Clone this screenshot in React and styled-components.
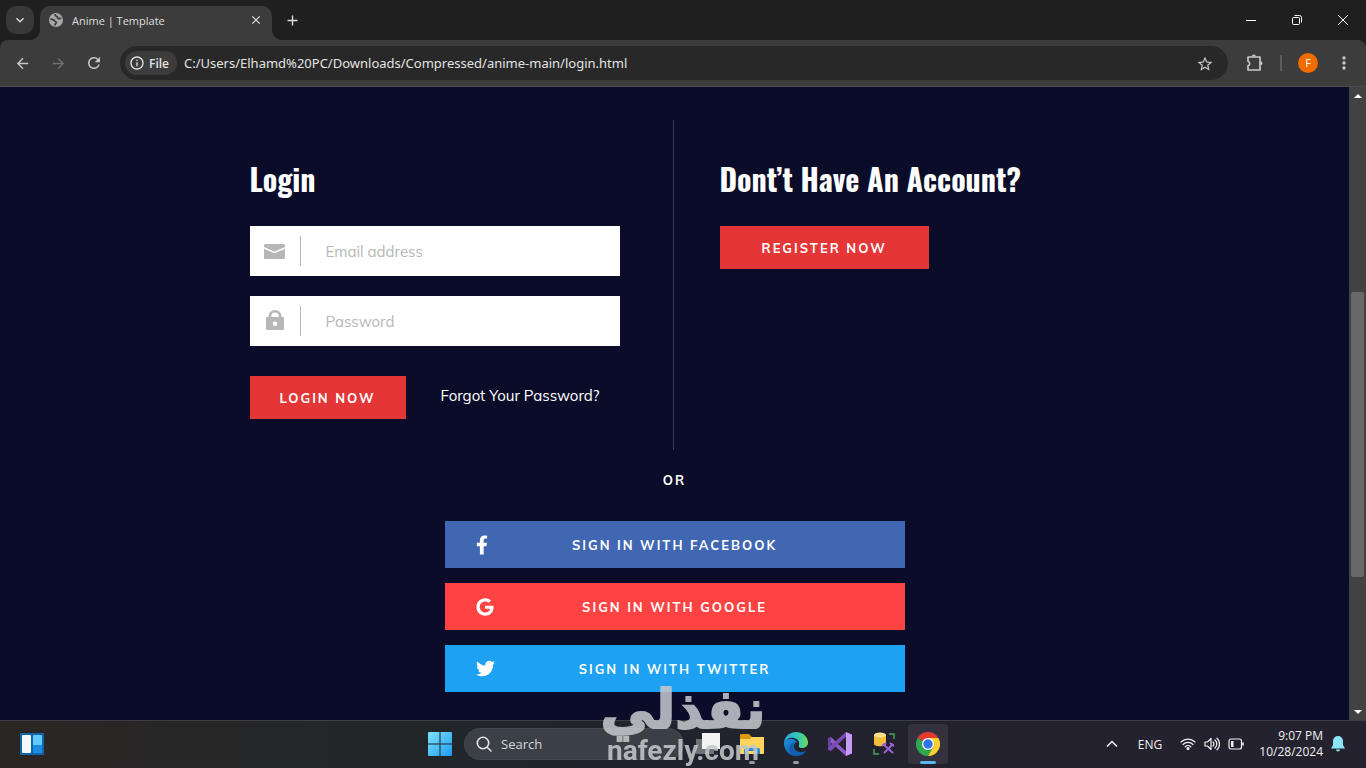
import React from 'react'
import { createGlobalStyle, styled } from 'styled-components'
import { FaFacebookF, FaGoogle, FaTwitter } from 'react-icons/fa'
import {
  MdArrowBack,
  MdArrowForward,
  MdRefresh,
  MdInfoOutline,
  MdStarBorder,
  MdMoreVert,
  MdClose,
  MdAdd,
  MdKeyboardArrowDown,
} from 'react-icons/md'

const uiFont = '"Open Sans", "Noto Sans", sans-serif'
const bodyFont = 'Mulish, Muli, Nunito, Lato, "Open Sans", sans-serif'

const GlobalStyle = createGlobalStyle`
  * {
    box-sizing: border-box;
  }
  body {
    margin: 0;
    background: #0b0c2a;
    font-family: ${uiFont};
  }
  button {
    padding: 0;
    border: 0;
    background: none;
    color: inherit;
    font-family: inherit;
    cursor: pointer;
  }
  input {
    min-width: 0;
    padding: 0;
    border: 0;
    outline: 0;
    background: none;
    font-family: inherit;
  }
  svg {
    display: block;
    flex: none;
  }
`

const Desktop = styled.div`
  display: flex;
  flex-direction: column;
  min-height: 100vh;
`

/* browser */
const TabStrip = styled.header`
  display: flex;
  align-items: center;
  height: 40px;
  padding-left: 6px;
  background: #1f1f1f;
  color: #dedede;
`

const TabSearch = styled.button`
  display: grid;
  place-items: center;
  width: 28px;
  height: 28px;
  border-radius: 10px;
  background: #383838;
`

const Tab = styled.div`
  position: relative;
  display: flex;
  align-items: center;
  align-self: flex-end;
  gap: 9px;
  width: 232px;
  height: 34px;
  margin-left: 6px;
  padding: 0 8px 6px 9px;
  border-radius: 10px 10px 0 0;
  background: #3c3c3c;
  font-size: 11px;

  &::before,
  &::after {
    content: '';
    position: absolute;
    bottom: 0;
    width: 10px;
    height: 10px;
  }
  &::before {
    right: 100%;
    background: radial-gradient(circle at 0 0, transparent 10px, #3c3c3c 10px);
  }
  &::after {
    left: 100%;
    background: radial-gradient(circle at 100% 0, transparent 10px, #3c3c3c 10px);
  }
`

const TabTitle = styled.span`
  flex: 1;
  white-space: nowrap;
`

const SmallButton = styled.button`
  display: grid;
  place-items: center;
  width: 16px;
  height: 16px;
`

const NewTab = styled(SmallButton)`
  width: 28px;
  height: 28px;
  margin-left: 6px;
`

const WindowButtons = styled.div`
  display: flex;
  margin-left: auto;
`

const WindowButton = styled.button`
  display: grid;
  place-items: center;
  width: 46px;
  height: 40px;
`

const ToolbarBack = styled.div`
  background: #1f1f1f;
`

const Toolbar = styled.div`
  display: flex;
  align-items: center;
  height: 47px;
  padding: 0 8px;
  border-bottom: 1px solid #4b4a52;
  border-radius: 8px 8px 0 0;
  background: #3c3c3c;
  color: #c7c7c7;
`

const ToolButton = styled.button`
  display: grid;
  place-items: center;
  width: 28px;
  height: 28px;
  margin-right: 8px;
  color: ${(props) => (props.$dim ? '#6f6f6f' : '#c7c7c7')};
`

const Omnibox = styled.div`
  display: flex;
  flex: 1;
  align-items: center;
  height: 34px;
  margin: 0 12px 0 4px;
  padding: 0 16px 0 5px;
  border-radius: 17px;
  background: #282828;
`

const FileChip = styled.button`
  display: flex;
  align-items: center;
  gap: 4px;
  height: 24px;
  padding: 0 8px 0 4px;
  border-radius: 12px;
  background: #3c3c3c;
  color: #e3e3e3;
  font-size: 12px;
  font-weight: 600;
`

const AddressInput = styled.input`
  flex: 1;
  margin-left: 7px;
  color: #e3e3e3;
  font-family: "Noto Sans", sans-serif;
  font-size: 13px;
`

const Divider = styled.span`
  width: 2px;
  height: 16px;
  margin: 0 12px 0 4px;
  background: #5c5c5c;
`

const Avatar = styled.button`
  width: 20px;
  height: 20px;
  margin: 0 12px 0 4px;
  border-radius: 50%;
  background: #ef6c00;
  color: #fff;
  font-size: 11px;
  line-height: 20px;
`

const MenuButton = styled(ToolButton)`
  margin-right: 0;
`

const Viewport = styled.div`
  display: flex;
  flex: 1;
`

const Page = styled.main`
  flex: 1;
  padding: 33px 20px 0;
  background: #0b0c2a;
  color: #fff;
  font-family: ${bodyFont};
`

const ScrollBar = styled.div`
  display: flex;
  flex-direction: column;
  width: 17px;
  background: #424242;
  color: #fff;
`

const ScrollArrow = styled.button`
  display: grid;
  place-items: center;
  width: 17px;
  height: 17px;
`

const ScrollSpace = styled.div`
  flex: ${(props) => props.$size};
`

const ScrollThumb = styled.div`
  flex: 285;
  margin: 0 2px;
  border-radius: 2px;
  background: #686868;
`

/* login page */
const Columns = styled.div`
  display: grid;
  grid-template-columns: 424px 1fr;
  max-width: 850px;
  margin: 0 auto;
`

const LoginColumn = styled.section`
  min-height: 330px;
  padding: 41px 53px 0 0;
  border-right: 1px solid #3b3c55;
`

const RegisterColumn = styled.section`
  padding: 41px 0 0 46px;
`

const Title = styled.h3`
  margin: 0 0 29px;
  font-family: Oswald, sans-serif;
  font-size: 30px;
  font-weight: 700;
  line-height: 36px;
  white-space: nowrap;
`

const Field = styled.label`
  display: flex;
  align-items: center;
  height: 50px;
  margin-bottom: 20px;
  background: #fff;
  color: #b7b7b7;
`

const FieldIcon = styled.span`
  display: grid;
  place-items: center;
  width: 51px;
  height: 30px;
  border-right: 1px solid #b7b7b7;
`

const FieldInput = styled.input`
  flex: 1;
  padding-left: 25px;
  color: #444;
  font-size: 15px;

  &::placeholder {
    color: #b7b7b7;
    opacity: 1;
  }
`

const FormFooter = styled.div`
  display: flex;
  align-items: flex-start;
  justify-content: space-between;
  padding-top: 10px;
`

const SiteButton = styled.button`
  height: 43px;
  padding: 0 ${(props) => (props.$wide ? 42 : 30)}px;
  background: #e53637;
  color: #fff;
  font-size: 13px;
  font-weight: 700;
  letter-spacing: 2px;
`

const ForgotLink = styled.a`
  padding-right: 20px;
  color: #fff;
  font-size: 15px;
  line-height: 40px;
  text-decoration: none;
`

const Social = styled.div`
  display: flex;
  flex-direction: column;
  gap: 15px;
  max-width: 460px;
  margin: 0 auto;
  padding-bottom: 28px;
`

const Or = styled.span`
  margin: 20px 0 15px;
  font-size: 13px;
  font-weight: 700;
  letter-spacing: 2px;
  line-height: 21px;
  text-align: center;
`

const SocialLink = styled.a`
  position: relative;
  display: grid;
  place-items: center;
  height: 47px;
  background: ${(props) => props.$color};
  color: #fff;
  font-size: 13px;
  font-weight: 700;
  letter-spacing: 2px;
  text-decoration: none;

  svg {
    position: absolute;
    left: 31px;
  }
`

const FacebookIcon = styled(FaFacebookF)`
  width: 12px;
  height: 20px;
`

/* taskbar */
const Taskbar = styled.footer`
  display: grid;
  grid-template-columns: 1fr auto 1fr;
  align-items: center;
  height: 48px;
  padding: 0 0 1px 2px;
  border-top: 1px solid #3e3d43;
  background: linear-gradient(90deg, #2b2624, #20262a 35%, #22222e 65%, #25222f);
  color: #f1f1f1;
`

const TaskGroup = styled.div`
  display: flex;
  align-items: center;
  gap: 4px;
`

const WidgetsButton = styled.button`
  padding-left: 18px;
`

const TaskButton = styled.button`
  position: relative;
  display: grid;
  place-items: center;
  width: 40px;
  height: 40px;
  border-radius: 4px;
  background: ${(props) => (props.$active ? '#34323f' : 'none')};

  &::after {
    content: '';
    position: absolute;
    bottom: 0;
    width: ${(props) => (props.$active ? 16 : 6)}px;
    height: 3px;
    border-radius: 2px;
    background: ${(props) => (props.$active ? '#5fb5f0' : props.$open ? '#9b9b9f' : 'none')};
  }
`

const SearchBox = styled.label`
  display: flex;
  align-items: center;
  gap: 9px;
  width: 220px;
  height: 32px;
  padding: 0 11px;
  border: 1px solid #454a50;
  border-radius: 16px;
  background: #3b4046;
`

const SearchInput = styled.input`
  flex: 1;
  color: #fff;
  font-size: 13px;

  &::placeholder {
    color: #d5d6d8;
    opacity: 1;
  }
`

const Tray = styled.div`
  display: flex;
  align-items: center;
  justify-content: flex-end;
  padding-right: 17px;
  font-size: 12px;
`

const TrayButton = styled.button`
  padding: 0 4px;
`

const Language = styled.button`
  margin: 0 14px 0 16px;
  font-size: 12px;
`

const Clock = styled.time`
  margin: 0 4px 0 11px;
  line-height: 16px;
  text-align: right;
`

const Watermark = styled.div`
  position: fixed;
  bottom: 0;
  left: 50%;
  display: flex;
  flex-direction: column;
  align-items: center;
  width: 164px;
  margin-left: -82px;
  color: #c3c5cb;
  opacity: 0.88;
  pointer-events: none;
`

const WatermarkArabic = styled.span`
  font-family: "DejaVu Sans", sans-serif;
  font-size: 54px;
  font-weight: 700;
  line-height: 48px;
  -webkit-text-stroke: 2px #c3c5cb;
`

const WatermarkLatin = styled.span`
  font-family: Roboto, sans-serif;
  font-size: 28px;
  font-weight: 700;
  line-height: 34px;
`

const GlobeIcon = () => (
  <svg width="14" height="14" viewBox="0 0 14 14">
    <circle cx="7" cy="7" r="7" fill="#a8a8a8" />
    <path
      d="M1.500 6.200c2 .200 3.500.400 4 1.500.300 1 1.500.600 1.700 1.600.200 1-1.200 1.300-1.200 3.200M6.500 1.200c-.800 1.500.200 2 1.200 2.200 1.200.200.500 1.800 1.700 2.200 1 .300 1.800-.600 3-.200"
      fill="none"
      stroke="#3c3c3c"
      strokeWidth="1.800"
    />
  </svg>
)

const MailIcon = () => (
  <svg width="21" height="15" viewBox="0 0 21 15" fill="currentColor">
    <path d="M1.500 0h18A1.500 1.500 0 0 1 21 1.500v1.600L11.400 7.300a2.200 2.200 0 0 1-1.800 0L0 3.100V1.500A1.500 1.500 0 0 1 1.500 0z" />
    <path d="M0 4.700l9.300 4.100a3 3 0 0 0 2.400 0L21 4.700V14a1 1 0 0 1-1 1H1a1 1 0 0 1-1-1z" />
  </svg>
)

const LockIcon = () => (
  <svg width="18" height="22" viewBox="0 0 18 22" fill="currentColor">
    <path
      fillRule="evenodd"
      d="M2.500 7V6a6.500 6 0 0 1 13 0V7H17a1 1 0 0 1 1 1v10.500a1.500 1.500 0 0 1-1.500 1.500h-15A1.500 1.500 0 0 1 0 18.500V8a1 1 0 0 1 1-1zM5.300 7h7.400V6a3.700 3.500 0 0 0-7.400 0zM9 11.500a2.300 2.300 0 1 0 0 4.600A2.300 2.300 0 0 0 9 11.500z"
    />
  </svg>
)

const ExtensionIcon = () => (
  <svg width="20" height="20" viewBox="0 0 20 20">
    <path
      d="M4 4h12v13H4v-4.200a2.400 2.400 0 0 0 0-4.600z"
      fill="none"
      stroke="currentColor"
      strokeWidth="1.700"
      strokeLinejoin="round"
    />
    <path d="M7.800 3.500a2 2 0 0 1 4 0zM16.500 8.300a2 2 0 0 1 0 4z" fill="currentColor" />
  </svg>
)

const WidgetsIcon = () => (
  <svg width="24" height="22" viewBox="0 0 24 22">
    <rect width="24" height="22" rx="1" fill="#1265a8" />
    <rect x="2" y="2" width="9" height="18" rx="1" fill="#f3f8fb" />
    <rect x="13" y="2" width="9" height="18" rx="1" fill="#63c8fb" />
    <path d="M13 12h9v7a1 1 0 0 1-1 1h-7a1 1 0 0 1-1-1z" fill="#1b8de4" />
  </svg>
)

const WindowsIcon = () => (
  <svg width="24" height="24" viewBox="0 0 24 24">
    <defs>
      <linearGradient id="win" x1="0" y1="0" x2="24" y2="24" gradientUnits="userSpaceOnUse">
        <stop offset="0" stopColor="#7fe3fb" />
        <stop offset="1" stopColor="#1c9cf0" />
      </linearGradient>
    </defs>
    <path fill="url(#win)" d="M1 0h10.500v11.500H0V1a1 1 0 0 1 1-1zM12.500 0H23a1 1 0 0 1 1 1v10.500H12.500zM0 12.500h11.500V24H1a1 1 0 0 1-1-1zM12.500 12.500H24V23a1 1 0 0 1-1 1H12.500z" />
  </svg>
)

const TaskViewIcon = () => (
  <svg width="24" height="24" viewBox="0 0 24 24">
    <rect x="0" y="7" width="18" height="15" fill="#6f7177" />
    <rect x="6" y="1" width="18" height="16" fill="#f3f3f4" />
  </svg>
)

const FolderIcon = () => (
  <svg width="24" height="24" viewBox="0 0 24 24">
    <path d="M0 3a1 1 0 0 1 1-1h8l3 3h11a1 1 0 0 1 1 1v5H0z" fill="#d99b13" />
    <path d="M0 7h10l2-2h12v16a1 1 0 0 1-1 1H1a1 1 0 0 1-1-1z" fill="#ffd45c" />
    <path d="M4 22v-4a2 2 0 0 1 2-2h12a2 2 0 0 1 2 2v4h-4v-3H8v3z" fill="#2487dc" />
  </svg>
)

const EdgeIcon = () => (
  <svg width="24" height="24" viewBox="0 0 24 24">
    <defs>
      <linearGradient id="edgeTop" x1="0" y1="8" x2="24" y2="8" gradientUnits="userSpaceOnUse">
        <stop offset="0" stopColor="#2aa7dc" />
        <stop offset="0.6" stopColor="#35c8b5" />
        <stop offset="1" stopColor="#6ade58" />
      </linearGradient>
      <linearGradient id="edgeLow" x1="2" y1="8" x2="18" y2="24" gradientUnits="userSpaceOnUse">
        <stop offset="0" stopColor="#1b8cd8" />
        <stop offset="1" stopColor="#0d4f9f" />
      </linearGradient>
    </defs>
    <path d="M12 0C5 0 .5 5 0 11c2-4 6-6 10-5 4 .8 6 4 5 7-.5 1.500-.3 3 3 3s6-2 6-6C23.500 4 18 0 12 0z" fill="url(#edgeTop)" />
    <path d="M0 11c0 7 5 13 12 13 4.500 0 8-2 10-5-5 2.500-11 1-12-4-.5-2.500 1-4.500 3-5-2-3-5-4-8-3S.5 9 0 11z" fill="url(#edgeLow)" />
    <path d="M8 23c-4-3-4.500-11 3.500-13-2 1.500-3 4-1 7 2.500 3.500 7.500 4 11.500 2-3 4.500-8.500 6-14 4z" fill="#135eaf" />
  </svg>
)

const VisualStudioIcon = () => (
  <svg width="24" height="24" viewBox="0 0 24 24">
    <path d="M0 6.500L3 5l15 14v5L0 8z" fill="#8e5bc4" />
    <path d="M0 17.500V6.500l3-1.500v14z" fill="#6b40a5" />
    <path d="M0 17.500L3 19 18 5V0L1 15z" fill="#7a4bb5" />
    <path d="M18 0l6 2.500v19L18 24z" fill="#c79bf5" />
    <path d="M18 5v14l-8-7z" fill="#25232f" />
  </svg>
)

const SqlStudioIcon = () => (
  <svg width="24" height="24" viewBox="0 0 24 24" fill="none">
    <path d="M2 3v9c0 3 12 3 12 0V3z" fill="#f2bd3a" />
    <ellipse cx="8" cy="3" rx="6" ry="2.500" fill="#ffe08a" />
    <path d="M17 2h5v5M2 17v5h5" stroke="#45a35a" strokeWidth="1.500" />
    <path d="M11 12l10 9M21 12l-9 9" stroke="#9a63d8" strokeWidth="2" />
    <path d="M10 14l4-3M18 11l4 3" stroke="#9a63d8" strokeWidth="2" />
  </svg>
)

const ChromeIcon = () => (
  <svg width="24" height="24" viewBox="0 0 24 24">
    <path d="M12 12L1.600 6A12 12 0 0 1 22.400 6z" fill="#e33b2e" />
    <path d="M12 12L1.600 6A12 12 0 0 0 12 24l5.200-9z" fill="#2da94f" />
    <path d="M12 6h10.400A12 12 0 0 1 12 24l5.200-9z" fill="#fdd032" />
    <circle cx="12" cy="12" r="6" fill="#fff" />
    <circle cx="12" cy="12" r="4.700" fill="#2f74e8" />
  </svg>
)

const SearchIcon = () => (
  <svg width="16" height="16" viewBox="0 0 16 16" fill="none" stroke="#e4e5e6" strokeWidth="1.600" strokeLinecap="round">
    <circle cx="7" cy="7" r="5.700" />
    <path d="M11.200 11.200L15 15" />
  </svg>
)

const TrayChevron = () => (
  <svg width="12" height="8" viewBox="0 0 12 8" fill="none" stroke="currentColor" strokeWidth="1.500">
    <path d="M1 6.500l5-5 5 5" />
  </svg>
)

const WifiIcon = () => (
  <svg width="16" height="14" viewBox="0 0 16 14" fill="none" stroke="currentColor" strokeWidth="1.200" strokeLinecap="round">
    <path d="M1 5a10 10 0 0 1 14 0M3 7.500a7 7 0 0 1 10 0M5.200 9.800a4 4 0 0 1 5.600 0" />
    <circle cx="8" cy="11.500" r="1" fill="currentColor" />
  </svg>
)

const VolumeIcon = () => (
  <svg width="16" height="14" viewBox="0 0 16 14" fill="none" stroke="currentColor" strokeWidth="1.200" strokeLinecap="round" strokeLinejoin="round">
    <path d="M1 5h2.500L7 1.500v11L3.500 9H1zM9 5a3 3 0 0 1 0 4M11 3a5.500 5.500 0 0 1 0 8M13 1.200a8 8 0 0 1 0 11.600" />
  </svg>
)

const BatteryIcon = () => (
  <svg width="16" height="12" viewBox="0 0 16 12" fill="none" stroke="currentColor" strokeWidth="1.200">
    <rect x="1" y="1" width="12.500" height="10" rx="2" />
    <path d="M15 4.500v3" strokeWidth="1.600" />
    <rect x="3" y="3" width="2.500" height="6" fill="currentColor" stroke="none" />
  </svg>
)

const BellIcon = () => (
  <svg width="14" height="16" viewBox="0 0 14 16" fill="#8be4f8">
    <path d="M7 0a5 5 0 0 1 5 5v4l2 3.500H0L2 9V5a5 5 0 0 1 5-5zM5 13.500h4a2 2 0 0 1-4 0z" />
  </svg>
)

const socials = [
  { name: 'Facebook', color: '#4267b2', icon: <FacebookIcon /> },
  { name: 'Google', color: '#ff4343', icon: <FaGoogle size={18} /> },
  { name: 'Twitter', color: '#1da1f2', icon: <FaTwitter size={19} /> },
]

const apps = [
  { name: 'Task view', icon: <TaskViewIcon /> },
  { name: 'File Explorer', icon: <FolderIcon />, open: true },
  { name: 'Edge', icon: <EdgeIcon />, open: true },
  { name: 'Visual Studio', icon: <VisualStudioIcon /> },
  { name: 'SQL Server', icon: <SqlStudioIcon /> },
  { name: 'Chrome', icon: <ChromeIcon />, active: true },
]

function Browser() {
  return (
    <>
      <TabStrip>
        <TabSearch aria-label="Search tabs"><MdKeyboardArrowDown size={16} /></TabSearch>
        <Tab>
          <GlobeIcon />
          <TabTitle>Anime | Template</TabTitle>
          <SmallButton aria-label="Close tab"><MdClose size={14} /></SmallButton>
        </Tab>
        <NewTab aria-label="New tab"><MdAdd size={17} /></NewTab>
        <WindowButtons>
          <WindowButton aria-label="Minimize">
            <svg width="10" height="10" stroke="#fff"><path d="M0 5.500h10" /></svg>
          </WindowButton>
          <WindowButton aria-label="Restore">
            <svg width="10" height="10" fill="none" stroke="#fff">
              <rect x="0.5" y="2.5" width="7" height="7" rx="1" />
              <path d="M2.500.5h5a2 2 0 0 1 2 2v5" />
            </svg>
          </WindowButton>
          <WindowButton aria-label="Close">
            <svg width="10" height="10" stroke="#fff"><path d="M0 0l10 10M10 0L0 10" /></svg>
          </WindowButton>
        </WindowButtons>
      </TabStrip>
      <ToolbarBack>
        <Toolbar>
          <ToolButton aria-label="Back"><MdArrowBack size={17} /></ToolButton>
          <ToolButton aria-label="Forward" $dim><MdArrowForward size={17} /></ToolButton>
          <ToolButton aria-label="Reload"><MdRefresh size={18} /></ToolButton>
          <Omnibox>
            <FileChip><MdInfoOutline size={16} />File</FileChip>
            <AddressInput
              aria-label="Address"
              defaultValue="C:/Users/Elhamd%20PC/Downloads/Compressed/anime-main/login.html"
            />
            <SmallButton aria-label="Bookmark"><MdStarBorder size={18} /></SmallButton>
          </Omnibox>
          <ToolButton aria-label="Extensions"><ExtensionIcon /></ToolButton>
          <Divider />
          <Avatar aria-label="Profile">F</Avatar>
          <MenuButton aria-label="Menu"><MdMoreVert size={20} /></MenuButton>
        </Toolbar>
      </ToolbarBack>
    </>
  )
}

function Login() {
  return (
    <Page>
      <Columns>
        <LoginColumn>
          <Title>Login</Title>
          <form onSubmit={(e) => e.preventDefault()}>
            <Field>
              <FieldIcon><MailIcon /></FieldIcon>
              <FieldInput type="text" placeholder="Email address" aria-label="Email address" />
            </Field>
            <Field>
              <FieldIcon><LockIcon /></FieldIcon>
              <FieldInput type="password" placeholder="Password" aria-label="Password" />
            </Field>
            <FormFooter>
              <SiteButton type="submit">LOGIN NOW</SiteButton>
              <ForgotLink href="#forgot">Forgot Your Password?</ForgotLink>
            </FormFooter>
          </form>
        </LoginColumn>
        <RegisterColumn>
          <Title>Dont’t Have An Account?</Title>
          <SiteButton type="button" $wide>REGISTER NOW</SiteButton>
        </RegisterColumn>
      </Columns>
      <Social>
        <Or>OR</Or>
        {socials.map((item) => (
          <SocialLink href={'#' + item.name} $color={item.color} key={item.name}>
            {item.icon}
            SIGN IN WITH {item.name.toUpperCase()}
          </SocialLink>
        ))}
      </Social>
    </Page>
  )
}

export default function App() {
  return (
    <>
      <GlobalStyle />
      <Desktop>
        <Browser />
        <Viewport>
          <Login />
          <ScrollBar>
            <ScrollArrow aria-label="Scroll up">
              <svg width="8" height="4" fill="currentColor"><path d="M0 4l4-4 4 4z" /></svg>
            </ScrollArrow>
            <ScrollSpace $size={188} />
            <ScrollThumb />
            <ScrollSpace $size={126} />
            <ScrollArrow aria-label="Scroll down">
              <svg width="8" height="4" fill="currentColor"><path d="M0 0l4 4 4-4z" /></svg>
            </ScrollArrow>
          </ScrollBar>
        </Viewport>
        <Taskbar>
          <TaskGroup>
            <WidgetsButton aria-label="Widgets"><WidgetsIcon /></WidgetsButton>
          </TaskGroup>
          <TaskGroup>
            <TaskButton aria-label="Start"><WindowsIcon /></TaskButton>
            <SearchBox>
              <SearchIcon />
              <SearchInput placeholder="Search" aria-label="Search" />
            </SearchBox>
            {apps.map((app) => (
              <TaskButton aria-label={app.name} $open={app.open} $active={app.active} key={app.name}>
                {app.icon}
              </TaskButton>
            ))}
          </TaskGroup>
          <Tray>
            <TrayButton aria-label="Hidden icons"><TrayChevron /></TrayButton>
            <Language>ENG</Language>
            <TrayButton aria-label="Network"><WifiIcon /></TrayButton>
            <TrayButton aria-label="Volume"><VolumeIcon /></TrayButton>
            <TrayButton aria-label="Battery"><BatteryIcon /></TrayButton>
            <Clock>
              9:07 PM
              <br />
              10/28/2024
            </Clock>
            <TrayButton aria-label="Notifications"><BellIcon /></TrayButton>
          </Tray>
        </Taskbar>
      </Desktop>
      <Watermark>
        <WatermarkArabic lang="ar">نفذلي</WatermarkArabic>
        <WatermarkLatin>nafezly.com</WatermarkLatin>
      </Watermark>
    </>
  )
}
